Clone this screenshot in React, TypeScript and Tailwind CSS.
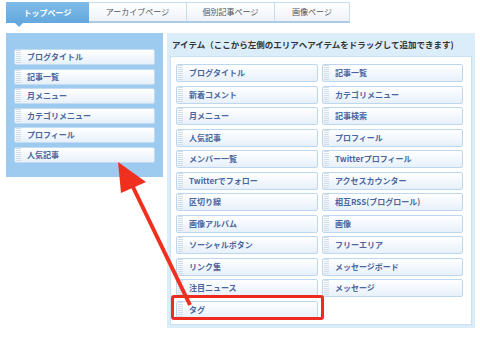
import React from "react";

const leftItems = ["ブログタイトル", "記事一覧", "月メニュー", "カテゴリメニュー", "プロフィール", "人気記事"];

const rightItems = [
  "ブログタイトル", "記事一覧",
  "新着コメント", "カテゴリメニュー",
  "月メニュー", "記事検索",
  "人気記事", "プロフィール",
  "メンバー一覧", "Twitterプロフィール",
  "Twitterでフォロー", "アクセスカウンター",
  "区切り線", "相互RSS(ブログロール)",
  "画像アルバム", "画像",
  "ソーシャルボタン", "フリーエリア",
  "リンク集", "メッセージボード",
  "注目ニュース", "メッセージ",
  "タグ",
];

const tabs = [
  { label: "アーカイブページ", w: "w-[99px]" },
  { label: "個別記事ページ", w: "w-[89px]" },
  { label: "画像ページ", w: "w-[76px]" },
];

function Item({ label, tall }: { label: string; tall?: boolean }) {
  return (
    <div
      className={
        tall
          ? "flex items-center h-[18px] border border-[#bcd7ee] rounded-[2px] bg-linear-to-b from-white to-[#e7f0fa]"
          : "flex items-center h-[16px] border border-[#c3dcf1] rounded-[2px] bg-linear-to-b from-white to-[#e7f0fa]"
      }
    >
      <div className="ml-[1px] w-[5px] h-full bg-[repeating-linear-gradient(to_bottom,#d3dde8_0px,#d3dde8_1px,transparent_1px,transparent_2px)]" />
      <span className="ml-[6px] text-[8px] leading-none font-bold text-[#4a66a0] whitespace-nowrap">
        {label}
      </span>
    </div>
  );
}

export default function App() {
  return (
    <div className="relative w-[480px] h-[338px] bg-white overflow-hidden pt-[2px] pl-[6px] font-['Noto_Sans_CJK_JP',sans-serif]">
      {/* tabs */}
      <div className="flex h-[21px]">
        <div className="relative w-[83px] h-full flex items-center justify-center bg-linear-to-b from-[#7fbbe8] to-[#64a8de] text-white text-[8px] font-bold">
          トップページ
          <div className="absolute left-[9px] top-[21px] w-0 h-0 border-l-[4px] border-l-transparent border-r-[4px] border-r-transparent border-t-[4px] border-t-[#66a9df]" />
        </div>
        {tabs.map((t) => (
          <div
            key={t.label}
            className={`${t.w} h-full flex items-center justify-center bg-linear-to-b from-white to-[#eef3f9] border border-[#c8dcee] border-b-[#a8cbe8] border-b-2 -ml-px first:ml-0 text-[8px] text-[#555]`}
          >
            {t.label}
          </div>
        ))}
      </div>

      {/* panels */}
      <div className="flex items-start gap-[4px] mt-[10px]">
        <div className="w-[157px] h-[144px] bg-[#9ccbef] pt-[16px] pl-[8px]">
          <div className="w-[141px] flex flex-col gap-[3.6px]">
            {leftItems.map((l) => (
              <Item key={l} label={l} />
            ))}
          </div>
        </div>

        <div className="w-[308px] h-[295px] bg-[#dcedfa] px-[3px] pb-[3px]">
          <div className="h-[23px] flex items-center pl-[2px] text-[8.5px] font-bold text-[#333] whitespace-nowrap">
            アイテム（ここから左側のエリアへアイテムをドラッグして追加できます)
          </div>
          <div className="h-[269px] bg-white border border-[#c9e1f4] pt-[7px] pl-[5px]">
            <div className="grid grid-cols-[142px_141px] gap-x-[4px] gap-y-[3.5px]">
              {rightItems.map((r) => (
                <Item key={r} label={r} tall />
              ))}
            </div>
          </div>
        </div>
      </div>

      {/* annotation */}
      <div className="absolute left-[171px] top-[295px] w-[153px] h-[25px] border-[3px] border-[#ef2a1f] rounded-[3px]" />
      <svg className="absolute left-0 top-0 pointer-events-none" width="480" height="338" viewBox="0 0 480 338">
        <line x1="190" y1="305" x2="132" y2="185" stroke="#f0301f" strokeWidth="4" />
        <polygon points="118,162 121,193 146,182" fill="#f0301f" />
      </svg>
    </div>
  );
}
